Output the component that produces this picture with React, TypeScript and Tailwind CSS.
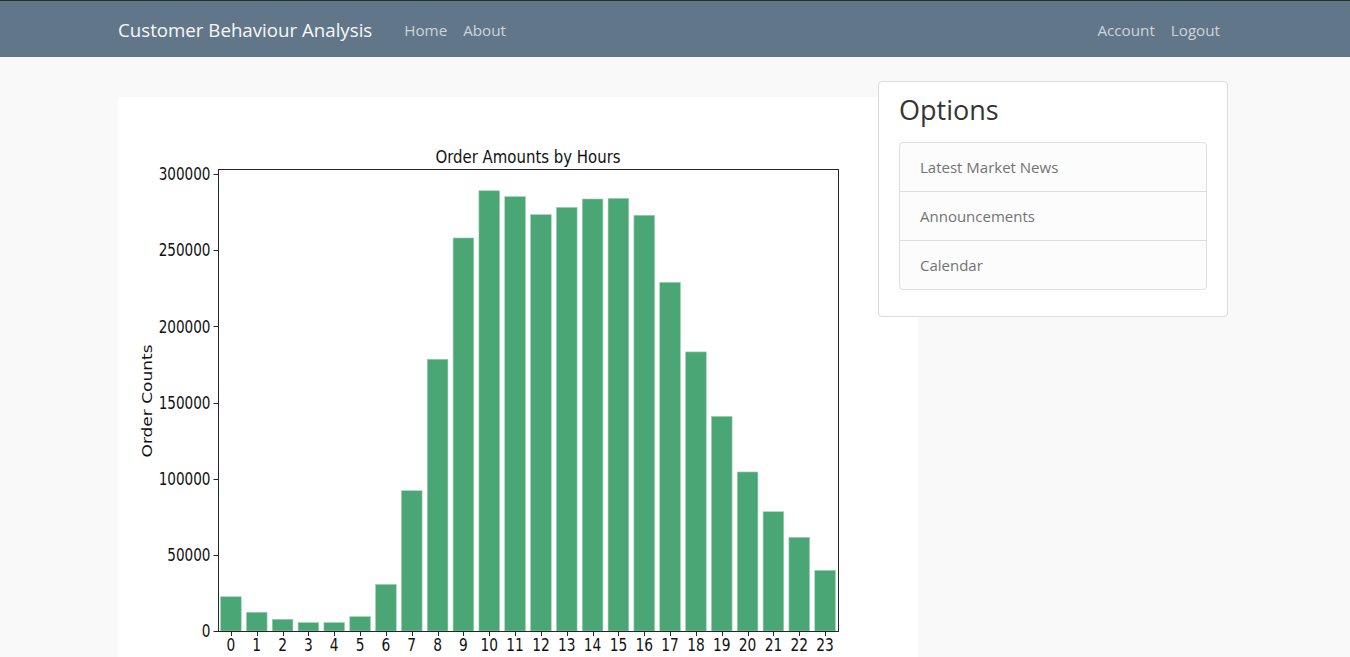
const hourly = [
  22500, 12300, 7700, 5500, 5500, 9400, 30600, 92100, 178400, 258000, 289000,
  285100, 273300, 278100, 283600, 284000, 272900, 228900, 183200, 140900,
  104400, 78300, 61500, 39800,
];

const yTicks = [0, 50000, 100000, 150000, 200000, 250000, 300000];

// axes box of the figure (800x600, matplotlib-like)
const AX = { left: 100, right: 720, top: 72, bottom: 534 };
const slot = (AX.right - AX.left) / hourly.length;
const yOf = (v: number) => AX.bottom - (v * 457) / 300000;

function OrderChart() {
  return (
    <svg
      width={800}
      height={600}
      viewBox="0 0 800 600"
      className="block shrink-0 bg-white"
      fontFamily="'DejaVu Sans', 'Liberation Sans', sans-serif"
    >
      <text
        transform="translate(410 66) scale(0.83 1)"
        textAnchor="middle"
        fontSize={18}
        fill="#111"
      >
        Order Amounts by Hours
      </text>

      {hourly.map((v, i) => {
        const cx = AX.left + (i + 0.5) * slot;
        const w = slot * 0.8;
        return (
          <rect
            key={i}
            x={cx - w / 2}
            y={yOf(v)}
            width={w}
            height={AX.bottom - yOf(v)}
            fill="#4ba676"
            stroke="#9fd0b5"
            strokeWidth={0.6}
          />
        );
      })}

      <rect
        x={100.5}
        y={72.5}
        width={620}
        height={462}
        fill="none"
        stroke="#262626"
        strokeWidth={1}
      />

      {yTicks.map((t) => {
        const y = Math.round(yOf(t)) + 0.5;
        return (
          <g key={t}>
            <line x1={95.5} x2={100} y1={y} y2={y} stroke="#262626" />
            <text
              transform={`translate(92.5 ${yOf(t) + 6.2}) scale(0.8 1)`}
              textAnchor="end"
              fontSize={17}
              fill="#111"
            >
              {t}
            </text>
          </g>
        );
      })}

      {hourly.map((_, i) => {
        const cx = AX.left + (i + 0.5) * slot;
        const x = Math.round(cx) + 0.5;
        return (
          <g key={i}>
            <line x1={x} x2={x} y1={534} y2={539} stroke="#262626" />
            <text
              transform={`translate(${cx} 553.7) scale(0.81 1)`}
              textAnchor="middle"
              fontSize={17}
              fill="#111"
            >
              {i}
            </text>
          </g>
        );
      })}

      <text
        transform="translate(34 304) rotate(-90) scale(1 0.83)"
        textAnchor="middle"
        fontSize={17}
        fill="#111"
      >
        Order Counts
      </text>
    </svg>
  );
}

export default function App() {
  return (
    <div className="min-h-screen bg-[#f9f9f9] font-['Open_Sans',sans-serif]">
      <nav className="h-[57px] border-t border-[#24302c] bg-[#617789] pt-[3px]">
        <div className="ml-[118px] flex h-full w-[1110px] items-center">
          <a className="text-[18.7px] text-[#f7f8f9]" href="#">
            Customer Behaviour Analysis
          </a>
          <ul className="ml-[32px] flex gap-4 text-[15.2px] text-[#cdd4da]">
            <li>Home</li>
            <li>About</li>
          </ul>
          <ul className="ml-auto flex gap-4 pr-[8px] text-[15.2px] text-[#cdd4da]">
            <li>Account</li>
            <li>Logout</li>
          </ul>
        </div>
      </nav>

      <main className="ml-[118px] flex w-[1110px] items-start">
        <div className="mt-[40px] w-[760px] shrink-0">
          <OrderChart />
        </div>

        <aside className="relative mt-[24px] w-[350px] rounded border border-[#dcdcdc] bg-white px-5 pt-[11px] pb-[26px]">
          <h2 className="mb-[15px] text-[27px] leading-[34px] text-[#343434]">
            Options
          </h2>
          <ul className="divide-y divide-[#dedede] rounded border border-[#dedede] bg-[#fcfcfc] text-[15px] text-[#737373]">
            <li className="px-5 py-3 leading-6">Latest Market News</li>
            <li className="px-5 py-3 leading-6">Announcements</li>
            <li className="px-5 py-3 leading-6">Calendar</li>
          </ul>
        </aside>
      </main>
    </div>
  );
}
